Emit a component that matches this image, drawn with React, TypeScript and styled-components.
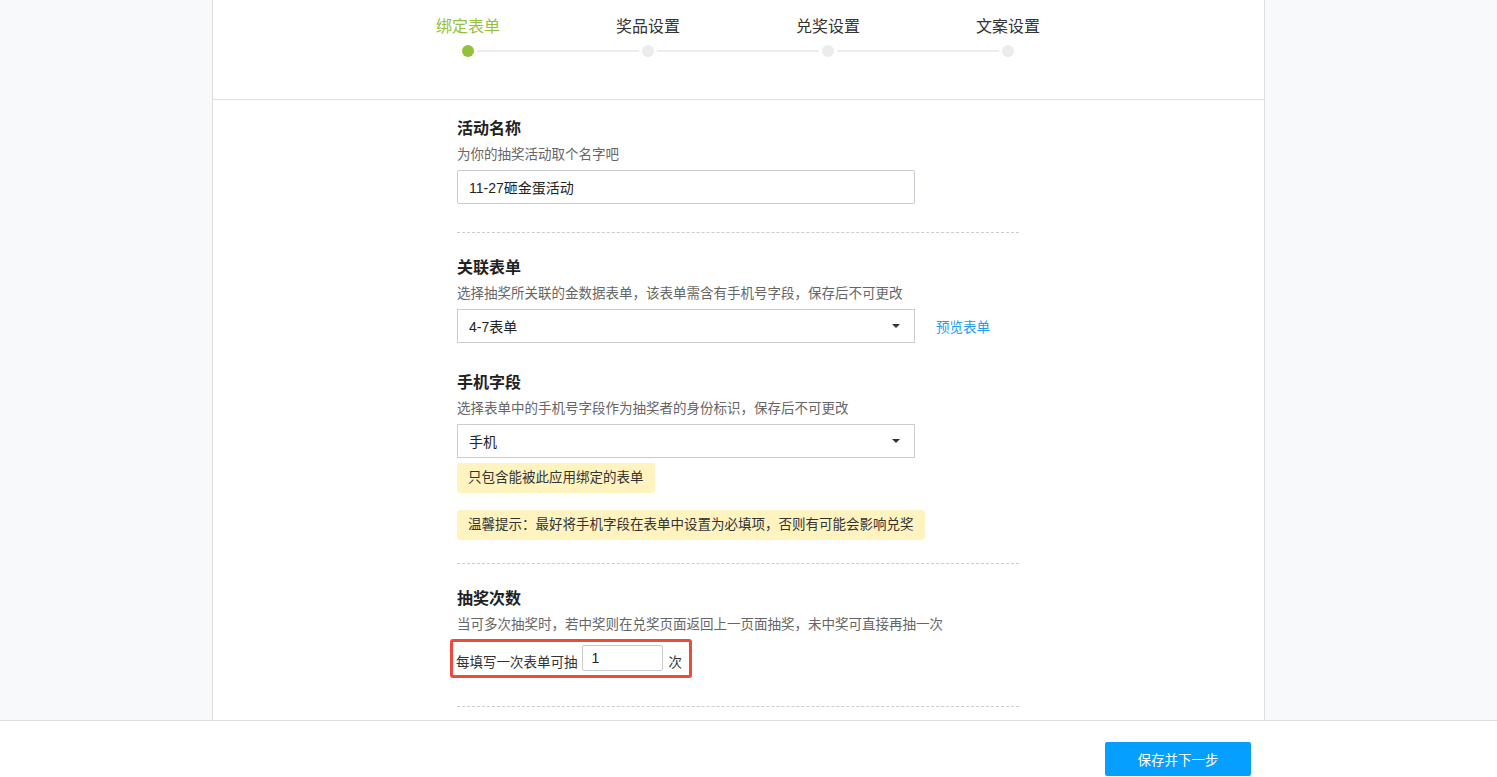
import React, { useState } from "react"
import styled, { createGlobalStyle } from "styled-components"

const GlobalStyle = createGlobalStyle`
  html, body {
    margin: 0;
    padding: 0;
    background: #f8f9fb;
    font-family: "Liberation Sans", "Noto Sans CJK SC", sans-serif;
    color: #333;
  }
`

const steps = ["绑定表单", "奖品设置", "兑奖设置", "文案设置"]

export default function App() {
  const [name, setName] = useState("11-27砸金蛋活动")
  const [times, setTimes] = useState("1")

  return (
    <>
      <GlobalStyle />
      <Page>
        <Panel>
          <StepsBar>
            <Steps>
              {steps.map((s, i) => (
                <Step key={s}>
                  <StepLabel $active={i === 0}>{s}</StepLabel>
                  <StepTrack>
                    <StepLine $off={i === 0} />
                    <StepDot $active={i === 0} />
                    <StepLine $off={i === steps.length - 1} />
                  </StepTrack>
                </Step>
              ))}
            </Steps>
          </StepsBar>

          <Form>
            <Section>
              <Title>活动名称</Title>
              <Desc>为你的抽奖活动取个名字吧</Desc>
              <TextInput value={name} onChange={e => setName(e.target.value)} />
            </Section>
            <Divider />

            <Section>
              <Title>关联表单</Title>
              <Desc>选择抽奖所关联的金数据表单，该表单需含有手机号字段，保存后不可更改</Desc>
              <Row>
                <Select>
                  <span>4-7表单</span>
                  <Caret />
                </Select>
                <LinkText>预览表单</LinkText>
              </Row>
            </Section>

            <Section $top={29}>
              <Title>手机字段</Title>
              <Desc>选择表单中的手机号字段作为抽奖者的身份标识，保存后不可更改</Desc>
              <Select>
                <span>手机</span>
                <Caret />
              </Select>
              <Notice $top={5}>只包含能被此应用绑定的表单</Notice>
              <Notice $top={17}>温馨提示：最好将手机字段在表单中设置为必填项，否则有可能会影响兑奖</Notice>
            </Section>
            <Divider $top={23} />

            <Section>
              <Title>抽奖次数</Title>
              <Desc>当可多次抽奖时，若中奖则在兑奖页面返回上一页面抽奖，未中奖可直接再抽一次</Desc>
              <Highlight>
                <InlineText>每填写一次表单可抽</InlineText>
                <SmallInput value={times} onChange={e => setTimes(e.target.value)} />
                <InlineText>次</InlineText>
              </Highlight>
            </Section>
            <Divider $top={28} />
          </Form>
        </Panel>
      </Page>

      <Footer>
        <PrimaryButton>保存并下一步</PrimaryButton>
      </Footer>
    </>
  )
}

const Page = styled.div`
  display: flex;
  padding-left: 212px;
  min-height: 100vh;
`

const Panel = styled.div`
  width: 1051px;
  background: #fff;
  border-left: 1px solid #ddd;
  border-right: 1px solid #ddd;
  padding-bottom: 80px;
`

const StepsBar = styled.div`
  height: 99px;
  border-bottom: 1px solid #ddd;
  display: flex;
`

const Steps = styled.div`
  display: flex;
  margin-left: 165px;
  padding-top: 17px;
`

const Step = styled.div`
  width: 180px;
  display: flex;
  flex-direction: column;
  align-items: center;
`

const StepLabel = styled.div<{ $active?: boolean }>`
  font-size: 16px;
  line-height: 20px;
  color: ${p => (p.$active ? "#94c13c" : "#333")};
`

const StepTrack = styled.div`
  width: 100%;
  margin-top: 8px;
  display: flex;
  align-items: center;
  gap: 3px;
`

const StepLine = styled.div<{ $off?: boolean }>`
  flex: 1;
  height: 2px;
  background: ${p => (p.$off ? "transparent" : "#ececec")};
`

const StepDot = styled.div<{ $active?: boolean }>`
  width: 12px;
  height: 12px;
  border-radius: 50%;
  background: ${p => (p.$active ? "#94c13c" : "#ececec")};
`

const Form = styled.div`
  width: 562px;
  margin-left: 244px;
  padding-top: 18px;
`

const Section = styled.div<{ $top?: number }>`
  display: flex;
  flex-direction: column;
  align-items: flex-start;
  margin-top: ${p => p.$top ?? 0}px;
`

const Title = styled.div`
  font-size: 16px;
  font-weight: bold;
  line-height: 22px;
  color: #222;
`

const Desc = styled.div`
  font-size: 13.5px;
  line-height: 18px;
  color: #666;
  margin-top: 6px;
  margin-bottom: 6px;
`

const TextInput = styled.input`
  box-sizing: border-box;
  width: 458px;
  height: 34px;
  border: 1px solid #c8ccd2;
  border-radius: 2px;
  padding: 0 11px;
  font-family: inherit;
  font-size: 14px;
  color: #222;
  outline: none;
`

const Row = styled.div`
  display: flex;
  align-items: center;
  gap: 21px;
`

const Select = styled.div`
  box-sizing: border-box;
  width: 458px;
  height: 34px;
  border: 1px solid #ccc;
  padding: 0 14px 0 11px;
  display: flex;
  align-items: center;
  justify-content: space-between;
  font-size: 14px;
  color: #222;
`

const Caret = styled.span`
  width: 0;
  height: 0;
  border-left: 4px solid transparent;
  border-right: 4px solid transparent;
  border-top: 4px solid #333;
`

const LinkText = styled.span`
  font-size: 13.5px;
  color: #1e9bf0;
  cursor: pointer;
`

const Notice = styled.div<{ $top: number }>`
  margin-top: ${p => p.$top}px;
  background: #fff3c0;
  border-radius: 3px;
  padding: 0 11px;
  font-size: 13.5px;
  line-height: 30px;
  color: #333;
`

const Divider = styled.div<{ $top?: number }>`
  border-top: 1px dashed #ccc;
  margin-top: ${p => p.$top ?? 28}px;
  margin-bottom: 24px;
`

const Highlight = styled.div`
  margin-left: -7px;
  margin-top: -1px;
  padding: 3px 7px 4px 3px;
  border: 3px solid #ee4a3b;
  border-radius: 3px;
  display: flex;
  align-items: center;
  gap: 4px;
`

const InlineText = styled.span`
  font-size: 13.5px;
  color: #333;
  padding-top: 6px;
`

const SmallInput = styled.input`
  box-sizing: border-box;
  width: 81px;
  height: 26px;
  margin-right: 2px;
  border: 1px solid #c8ccd2;
  border-radius: 2px;
  padding: 0 9px;
  font-family: inherit;
  font-size: 14px;
  color: #222;
  outline: none;
`

const Footer = styled.div`
  position: fixed;
  left: 0;
  right: 0;
  bottom: 0;
  box-sizing: border-box;
  height: 57px;
  background: #fff;
  border-top: 1px solid #ddd;
  display: flex;
  justify-content: flex-end;
  align-items: flex-start;
  padding: 21px 246px 0 0;
`

const PrimaryButton = styled.button`
  width: 146px;
  height: 34px;
  border: none;
  border-radius: 2px;
  background: #05a0ff;
  color: #fff;
  font-family: inherit;
  font-size: 13.5px;
  cursor: pointer;
`
